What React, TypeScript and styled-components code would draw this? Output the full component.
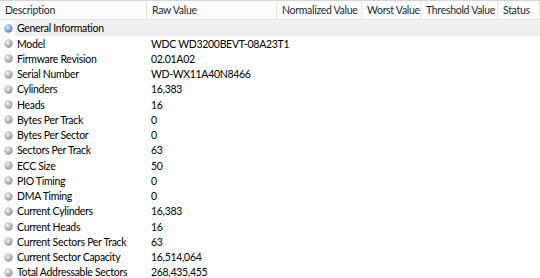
import React from 'react';
import styled, { createGlobalStyle } from 'styled-components';

const GlobalStyle = createGlobalStyle`
  html, body {
    margin: 0;
    padding: 0;
    background: #ffffff;
  }
  body {
    font-family: Lato, 'Noto Sans', sans-serif;
    font-size: 10.5px;
    letter-spacing: -0.3px;
    color: #000;
  }
`;

const COLUMNS = [
  { title: 'Description', width: 147 },
  { title: 'Raw Value', width: 130 },
  { title: 'Normalized Value', width: 85 },
  { title: 'Worst Value', width: 59 },
  { title: 'Threshold Value', width: 77 },
  { title: 'Status', width: 42 },
];

const ROWS: [string, string][] = [
  ['Model', 'WDC WD3200BEVT-08A23T1'],
  ['Firmware Revision', '02.01A02'],
  ['Serial Number', 'WD-WX11A40N8466'],
  ['Cylinders', '16,383'],
  ['Heads', '16'],
  ['Bytes Per Track', '0'],
  ['Bytes Per Sector', '0'],
  ['Sectors Per Track', '63'],
  ['ECC Size', '50'],
  ['PIO Timing', '0'],
  ['DMA Timing', '0'],
  ['Current Cylinders', '16,383'],
  ['Current Heads', '16'],
  ['Current Sectors Per Track', '63'],
  ['Current Sector Capacity', '16,514,064'],
  ['Total Addressable Sectors', '268,435,455'],
];

const Table = styled.div`
  width: 540px;
  height: 278px;
  overflow: hidden;
  background: #fff;
`;

const Header = styled.div`
  display: flex;
  height: 18px;
  border-top: 1px solid #d5d5d5;
  border-bottom: 1px solid #e5e5e5;
  background: linear-gradient(#ffffff, #fbfbfc);
`;

const HeaderCell = styled.div<{ $w: number }>`
  flex: 0 0 ${(p) => p.$w}px;
  box-sizing: border-box;
  padding-left: 5px;
  border-right: 1px solid #e3e4e6;
  line-height: 19px;
  color: #1e2a3a;
  white-space: nowrap;
  overflow: hidden;
`;

const Row = styled.div<{ $group?: boolean }>`
  display: flex;
  align-items: center;
  height: ${(p) => (p.$group ? 16 : 15.25)}px;
  white-space: nowrap;
`;

const IconSlot = styled.div`
  flex: 0 0 17px;
  display: flex;
  align-items: center;
  padding-left: 4px;
  box-sizing: border-box;
`;

const Label = styled.div<{ $group?: boolean }>`
  flex: 0 0 ${(p) => (p.$group ? 'auto' : '130px')};
  ${(p) => p.$group && 'flex: 1; background: #f0f0f0; align-self: stretch; display: flex; align-items: center; padding-left: 2px; margin-left: -2px;'}
`;

const Value = styled.div`
  flex: 1;
  padding-left: 4px;
`;

const Dot = ({ blue }: { blue?: boolean }) => (
  <svg width="9" height="9" viewBox="0 0 9 9">
    <defs>
      <radialGradient id={blue ? 'gb' : 'gg'} cx="0.38" cy="0.35" r="0.7">
        <stop offset="0" stopColor={blue ? '#d9ecfb' : '#f2f2f2'} />
        <stop offset="0.6" stopColor={blue ? '#7fa9d6' : '#b8b8b8'} />
        <stop offset="1" stopColor={blue ? '#4d7fb8' : '#8e8e8e'} />
      </radialGradient>
    </defs>
    <circle cx="4.5" cy="4.5" r="4.2" fill={`url(#${blue ? 'gb' : 'gg'})`} />
  </svg>
);

export default function App() {
  return (
    <Table>
      <GlobalStyle />
      <Header>
        {COLUMNS.map((c) => (
          <HeaderCell key={c.title} $w={c.width}>
            {c.title}
          </HeaderCell>
        ))}
      </Header>
      <Row $group>
        <IconSlot>
          <Dot blue />
        </IconSlot>
        <Label $group>General Information</Label>
      </Row>
      {ROWS.map(([label, value]) => (
        <Row key={label}>
          <IconSlot>
            <Dot />
          </IconSlot>
          <Label>{label}</Label>
          <Value>{value}</Value>
        </Row>
      ))}
    </Table>
  );
}
